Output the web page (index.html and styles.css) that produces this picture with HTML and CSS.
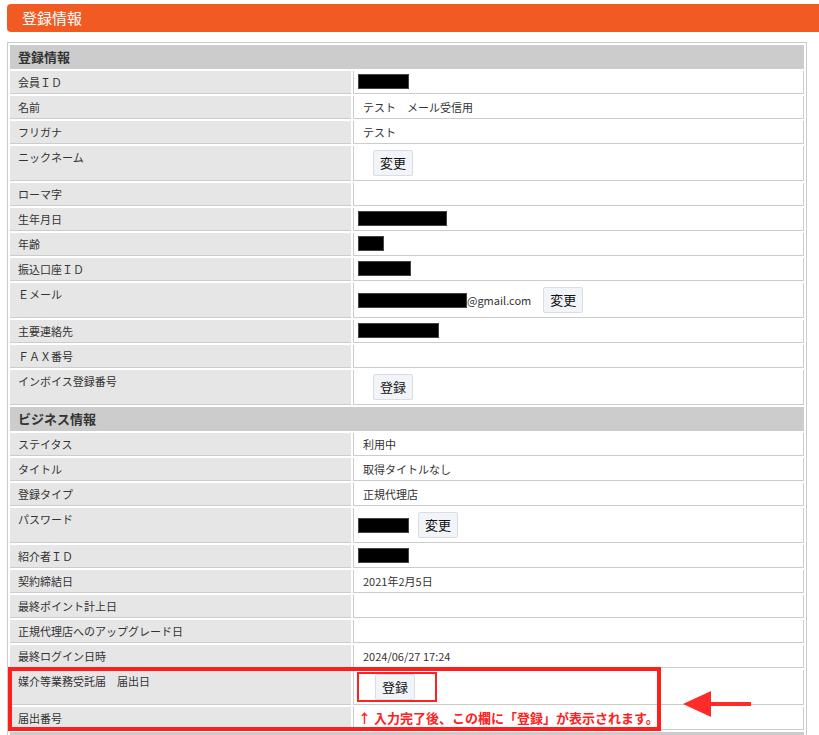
FILE: index.html
```html
<!DOCTYPE html>
<html lang="ja">
<head>
    <meta charset="UTF-8">
    <title>登録情報</title>
    <link rel="stylesheet" href="styles.css">
</head>
<body>
<div class="page">
    <h1 class="title">登録情報</h1>
    <div class="sheet">
        <table class="info">
            <tr><th colspan="2" class="section">登録情報</th></tr>
            <tr><td class="label">会員ＩＤ</td><td class="value"><span class="mask mask-s"></span></td></tr>
            <tr><td class="label">名前</td><td class="value">テスト　メール受信用</td></tr>
            <tr><td class="label">フリガナ</td><td class="value">テスト</td></tr>
            <tr><td class="label">ニックネーム</td><td class="value"><div class="line"><button class="btn btn-indent">変更</button></div></td></tr>
            <tr><td class="label">ローマ字</td><td class="value"></td></tr>
            <tr><td class="label">生年月日</td><td class="value"><span class="mask mask-xl"></span></td></tr>
            <tr><td class="label">年齢</td><td class="value"><span class="mask mask-xs"></span></td></tr>
            <tr><td class="label">振込口座ＩＤ</td><td class="value"><span class="mask mask-m"></span></td></tr>
            <tr><td class="label">Ｅメール</td><td class="value"><div class="line"><span class="mask mask-xxl"></span><span>@gmail.com</span><button class="btn btn-gap">変更</button></div></td></tr>
            <tr><td class="label">主要連絡先</td><td class="value"><span class="mask mask-l"></span></td></tr>
            <tr><td class="label">ＦＡＸ番号</td><td class="value"></td></tr>
            <tr><td class="label">インボイス登録番号</td><td class="value"><div class="line"><button class="btn btn-indent">登録</button></div></td></tr>

            <tr><th colspan="2" class="section">ビジネス情報</th></tr>
            <tr><td class="label">ステイタス</td><td class="value">利用中</td></tr>
            <tr><td class="label">タイトル</td><td class="value">取得タイトルなし</td></tr>
            <tr><td class="label">登録タイプ</td><td class="value">正規代理店</td></tr>
            <tr><td class="label">パスワード</td><td class="value"><div class="line"><span class="mask mask-s"></span><button class="btn btn-near">変更</button></div></td></tr>
            <tr><td class="label">紹介者ＩＤ</td><td class="value"><span class="mask mask-s"></span></td></tr>
            <tr><td class="label">契約締結日</td><td class="value">2021年2月5日</td></tr>
            <tr><td class="label">最終ポイント計上日</td><td class="value"></td></tr>
            <tr><td class="label">正規代理店へのアップグレード日</td><td class="value"></td></tr>
            <tr><td class="label">最終ログイン日時</td><td class="value">2024/06/27 17:24</td></tr>
            <tr><td class="label">媒介等業務受託届　届出日</td><td class="value"><div class="line"><span class="mark"><button class="btn">登録</button></span></div></td></tr>
            <tr><td class="label">届出番号</td><td class="value"><span class="note">↑ 入力完了後、この欄に「登録」が表示されます。</span></td></tr>

            <tr><th colspan="2" class="section">&nbsp;</th></tr>
        </table>

        <!-- annotation overlays -->
        <div class="frame"></div>
        <svg class="pointer" width="68" height="30" viewBox="0 0 68 30">
            <polygon points="0,14 28,1 28,27" fill="#ff2a2a"/>
            <rect x="27" y="12" width="41" height="4" fill="#ff2a2a"/>
        </svg>
    </div>
</div>
</body>
</html>
```

FILE: styles.css
```css
*, ::before, ::after {
    box-sizing: border-box;
}

html, body {
    margin: 0;
    overflow: hidden;
}

body {
    font-family: "Noto Sans CJK JP", "Noto Sans", sans-serif;
    color: #333;
    background: #fff;
}

.page {
    padding: 4px 0 0 7px;
}

.title {
    margin: 0 0 10px;
    height: 28px;
    padding-left: 15px;
    background: #f15a22;
    border-radius: 4px 0 0 4px;
    color: #fff;
    font-size: 15px;
    font-weight: normal;
    line-height: 28px;
}

.sheet {
    position: relative;
}

.info {
    width: 800px;
    border: 1px solid #ccc;
    border-spacing: 2px;
    font-size: 11px;
    line-height: 14px;
}

.section {
    height: 24px;
    padding: 0 8px;
    background: #ccc;
    text-align: left;
    font-size: 13px;
    font-weight: bold;
    line-height: 16px;
}

.label {
    width: 341px;
    height: 23px;
    padding: 4px 8px;
    background: #e6e6e6;
    border-bottom: 1px solid #ccc;
    vertical-align: top;
}

.value {
    height: 23px;
    padding: 4px 9px;
    border: 1px solid #ccc;
    border-top: none;
    vertical-align: middle;
}

.line {
    display: flex;
    align-items: center;
    height: 26px;
}

.mask {
    display: inline-block;
    height: 15px;
    margin: -1px 0 0 -5px;
    background: #000;
    border: 1px solid #444;
    vertical-align: top;
}
.line .mask {
    margin-top: 0;
}
.mask-xs { width: 26px; }
.mask-s { width: 51px; }
.mask-m { width: 53px; }
.mask-l { width: 81px; }
.mask-xl { width: 89px; }
.mask-xxl { width: 109px; }

.btn {
    height: 26px;
    padding: 0 6px;
    background: #f1f4f9;
    border: 1px solid #dadde2;
    border-radius: 2px;
    color: #111;
    font-family: inherit;
    font-size: 13px;
    line-height: 24px;
}
.btn-indent { margin-left: 10px; }
.btn-gap { margin-left: 12px; }
.btn-near { margin-left: 9px; }

.mark {
    display: inline-block;
    height: 30px;
    margin: -2px 0 -2px -6px;
    padding: 0 20px 0 16px;
    border: 2px solid #ff2020;
}

.note {
    margin-left: -5px;
    color: #ff2020;
    font-size: 13px;
    font-weight: bold;
}

.frame {
    position: absolute;
    left: 1px;
    top: 625px;
    width: 653px;
    height: 64px;
    border: 4px solid #ff1e1e;
}

.pointer {
    position: absolute;
    left: 676px;
    top: 648px;
}
```
